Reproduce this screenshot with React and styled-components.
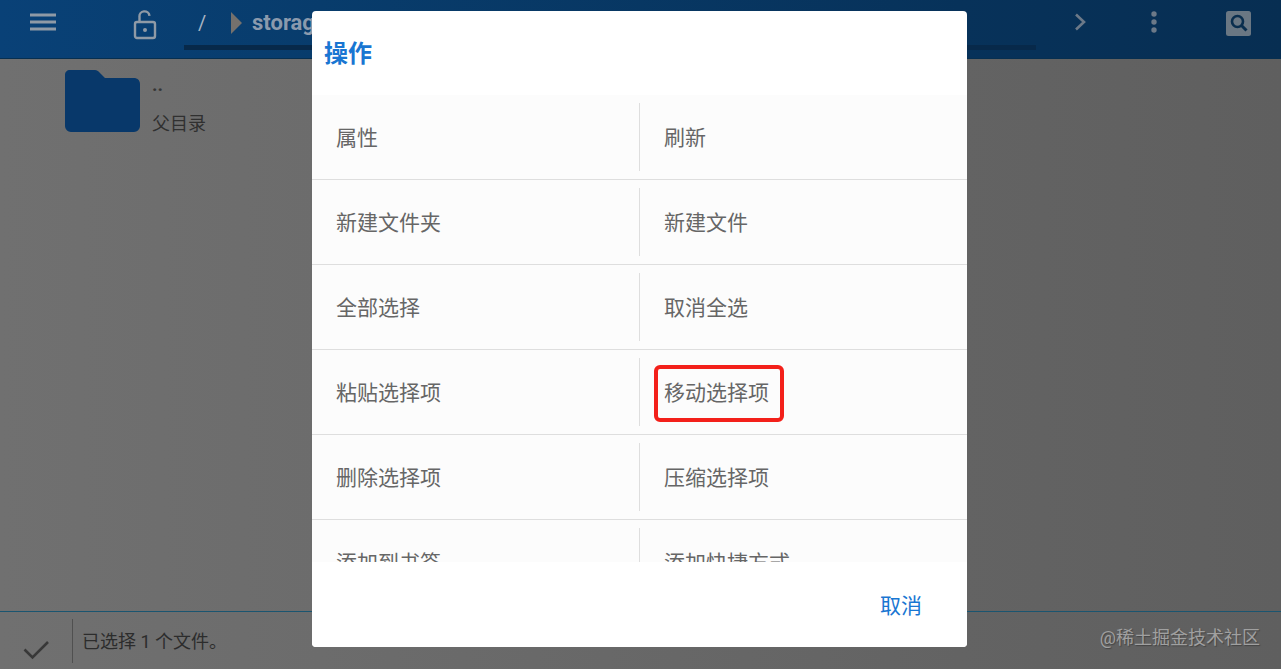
import React from "react";
import styled, { createGlobalStyle } from "styled-components";

const Global = createGlobalStyle`
  html, body { margin: 0; padding: 0; height: 100%; overflow: hidden; }
  body { font-family: Roboto, "Noto Sans CJK SC", sans-serif; }
  * { box-sizing: border-box; }
`;

const Page = styled.div`
  position: relative;
  width: 1281px;
  height: 669px;
  display: flex;
  flex-direction: column;
  overflow: hidden;
  background: linear-gradient(90deg, #707070 0, #6c6c6c 25%, #636363 75%, #5f5f5f 100%);
`;

const Header = styled.header`
  height: 59px;
  flex: none;
  display: flex;
  background: linear-gradient(90deg, #094177 0, #083c6c 25%, #07325a 75%, #072e52 100%);
  border-bottom: 1px solid #072f50;
`;

const IconSlot = styled.div`
  width: ${(p) => p.$w}px;
  flex: none;
  height: 58px;
  display: flex;
  align-items: center;
  justify-content: center;
  padding-bottom: ${(p) => p.$pb || 14}px;
`;

const Crumbs = styled.div`
  width: 852px;
  flex: none;
  height: 50px;
  display: flex;
  align-items: center;
  border-bottom: 5px solid #07294a;
`;

const Slash = styled.span`
  width: 47px;
  padding-left: 14px;
  font-size: 20px;
  font-weight: 400;
  color: #a9b5c3;
`;

const Arrow = styled.svg`
  flex: none;
  margin-right: 9px;
`;

const CrumbText = styled.span`
  font-size: 22px;
  font-weight: 700;
  color: #8b9aad;
`;

const List = styled.main`
  flex: 1;
  padding: 11px 0 0 65px;
  display: flex;
  align-items: flex-start;
  gap: 12px;
`;

const ItemText = styled.div`
  display: flex;
  flex-direction: column;
`;

const ItemName = styled.span`
  font-size: 19px;
  line-height: 30px;
  font-weight: 700;
  color: #353535;
`;

const ItemMeta = styled.span`
  font-size: 18px;
  line-height: 28px;
  margin-top: 10px;
  color: #303030;
`;

const Footer = styled.footer`
  height: 58px;
  flex: none;
  display: flex;
  align-items: center;
  border-top: 1px solid #1a5570;
`;

const CheckSlot = styled.div`
  width: 72px;
  height: 100%;
  padding: 28px 0 0 23px;
  flex: none;
`;

const Status = styled.div`
  height: 44px;
  margin-top: 1px;
  padding: 0 0 2px 9px;
  display: flex;
  align-items: center;
  border-left: 1px solid #505050;
  font-size: 18px;
  color: #2c2c2c;
`;

const Dialog = styled.section`
  position: absolute;
  left: 312px;
  top: 11px;
  width: 655px;
  height: 636px;
  display: flex;
  flex-direction: column;
  background: #fff;
  border-radius: 4px;
  overflow: hidden;
`;

const Title = styled.h2`
  margin: 0;
  height: 84px;
  flex: none;
  padding: 26px 0 0 12px;
  font-size: 24px;
  line-height: 34px;
  font-weight: 700;
  color: #1976d2;
`;

const Scroll = styled.div`
  height: 467px;
  flex: none;
  overflow: hidden;
  background: #fcfcfc;
`;

const Row = styled.div`
  height: 85px;
  display: grid;
  grid-template-columns: 327px 328px;
  border-bottom: 1px solid #dedede;
`;

const Cell = styled.div`
  position: relative;
  margin: 8px 0;
  padding: 0 0 2px 24px;
  display: flex;
  align-items: center;
  font-size: 21px;
  color: #666;
  border-left: ${(p) => (p.$second ? "1px solid #dedede" : "none")};
`;

const Highlight = styled.span`
  position: absolute;
  left: 14px;
  top: 7px;
  width: 130px;
  height: 57px;
  border: 4px solid #f3201a;
  border-radius: 6px;
`;

const Actions = styled.div`
  flex: 1;
  display: flex;
  justify-content: flex-end;
  align-items: flex-start;
  padding: 27px 45px 0 0;
  background: #fff;
`;

const Cancel = styled.button`
  border: 0;
  padding: 0;
  background: none;
  font-family: inherit;
  font-size: 21px;
  line-height: 34px;
  color: #1976d2;
`;

const Watermark = styled.div`
  position: absolute;
  right: 21px;
  bottom: 18px;
  font-size: 18px;
  line-height: 26px;
  color: #a0a0a0;
  text-shadow: 1px 1px 1px #444;
`;

const rows = [
  ["属性", "刷新"],
  ["新建文件夹", "新建文件"],
  ["全部选择", "取消全选"],
  ["粘贴选择项", "移动选择项"],
  ["删除选择项", "压缩选择项"],
  ["添加到书签", "添加快捷方式"],
];

export default function App() {
  return (
    <Page>
      <Global />
      <Header>
        <IconSlot $w={85}>
          <svg width="26" height="18" viewBox="0 0 26 18" fill="none" stroke="#8f9aa6" strokeWidth="3">
            <path d="M0 2h26M0 9h26M0 16h26" />
          </svg>
        </IconSlot>
        <IconSlot $w={99} $pb={8}>
          <svg width="24" height="30" viewBox="0 0 24 30" fill="none" stroke="#8f9aa6" strokeWidth="2.4" style={{ marginLeft: 20 }}>
            <rect x="2" y="12" width="20" height="16" rx="2" />
            <path d="M6.5 12V7a5 5 0 0 1 10 -1.2" />
            <circle cx="12" cy="20" r="2" fill="#8f9aa6" stroke="none" />
          </svg>
        </IconSlot>
        <Crumbs>
          <Slash>/</Slash>
          <Arrow width="12" height="22" viewBox="0 0 12 22">
            <path d="M0 0l11 11L0 22z" fill="#75716d" />
          </Arrow>
          <CrumbText>storage</CrumbText>
        </Crumbs>
        <IconSlot $w={88}>
          <svg width="12" height="18" viewBox="0 0 12 18" fill="none" stroke="#6c7988" strokeWidth="2.6">
            <path d="M2 1.5L10 9l-8 7.5" />
          </svg>
        </IconSlot>
        <IconSlot $w={60}>
          <svg width="6" height="22" viewBox="0 0 6 22" fill="#6c7988">
            <circle cx="3" cy="3" r="2.7" />
            <circle cx="3" cy="11" r="2.7" />
            <circle cx="3" cy="19" r="2.7" />
          </svg>
        </IconSlot>
        <IconSlot $w={108} $pb={12}>
          <svg width="25" height="25" viewBox="0 0 25 25" fill="none" stroke="#0a2e4e" strokeWidth="2.6">
            <rect width="25" height="25" rx="2.5" fill="#6a7783" stroke="none" />
            <circle cx="11.5" cy="10.5" r="5.5" />
            <path d="M15.5 14.5l5 5" strokeWidth="3" />
          </svg>
        </IconSlot>
      </Header>
      <List>
        <svg width="75" height="62" viewBox="0 0 75 62" style={{ flex: "none" }}>
          <path d="M5 0h25c2 0 3 1 4 2l6 6h29c3 0 6 2 6 6v42c0 3-3 6-6 6H6c-3 0-6-3-6-6V5c0-3 2-5 5-5z" fill="#08386a" />
        </svg>
        <ItemText>
          <ItemName>..</ItemName>
          <ItemMeta>父目录</ItemMeta>
        </ItemText>
      </List>
      <Footer>
        <CheckSlot>
          <svg width="26" height="20" viewBox="0 0 26 20" fill="none" stroke="#383838" strokeWidth="2.6">
            <path d="M1.5 9.5l8 8L25 2" />
          </svg>
        </CheckSlot>
        <Status>已选择 1 个文件。</Status>
      </Footer>
      <Dialog>
        <Title>操作</Title>
        <Scroll>
          {rows.map(([a, b]) => (
            <Row key={a}>
              <Cell>{a}</Cell>
              <Cell $second>
                {b}
                {b === "移动选择项" && <Highlight />}
              </Cell>
            </Row>
          ))}
        </Scroll>
        <Actions>
          <Cancel>取消</Cancel>
        </Actions>
      </Dialog>
      <Watermark>@稀土掘金技术社区</Watermark>
    </Page>
  );
}
